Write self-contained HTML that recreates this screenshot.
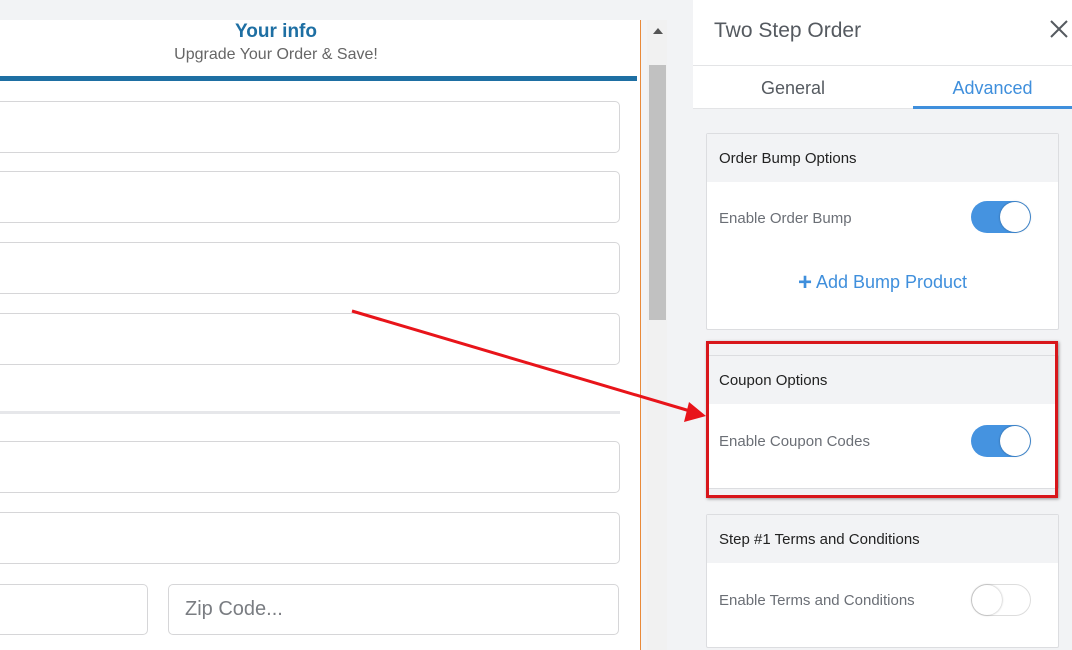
<!DOCTYPE html>
<html><head><style>
*{box-sizing:border-box;margin:0;padding:0}
body{width:1072px;height:650px;overflow:hidden;background:#f2f3f5;font-family:"Liberation Sans",sans-serif;position:relative}
.a{position:absolute}
.inp{position:absolute;border:1px solid #d6d6d8;border-radius:5px;background:#fff}
.card{position:absolute;left:706px;width:353px;background:#fff;border:1px solid #dcdde0;border-radius:2px}
.ch{height:48px;background:#f2f3f5;padding:16px 12px;font-size:15px;color:#222}
.lbl{position:absolute;left:12px;font-size:15px;color:#6b6f76}
.tg{position:absolute;left:264px;width:60px;height:32px;border-radius:16px;background:#4593e0}
.tg i{position:absolute;right:1px;top:1px;width:30px;height:30px;border-radius:50%;background:#fff;box-shadow:0 0 2px rgba(0,0,0,.35)}
.tg.off{background:#fff;border:1px solid #ddd}
.tg.off i{left:0;right:auto;top:0}
</style></head><body>
<div class="a" style="left:0;top:20px;width:641px;height:630px;background:#fff;border-right:1px solid #e98a3a"></div>
<div class="a" style="left:0;top:21px;width:552px;text-align:center;font-size:19px;font-weight:bold;color:#1e6fa3">Your info</div>
<div class="a" style="left:0;top:46px;width:552px;text-align:center;font-size:16px;color:#666">Upgrade Your Order &amp; Save!</div>
<div class="a" style="left:0;top:76px;width:637px;height:5px;background:#1e6fa3"></div>
<div class="inp" style="left:-10px;top:101px;width:630px;height:52px"></div>
<div class="inp" style="left:-10px;top:171px;width:630px;height:52px"></div>
<div class="inp" style="left:-10px;top:242px;width:630px;height:52px"></div>
<div class="inp" style="left:-10px;top:313px;width:630px;height:52px"></div>
<div class="a" style="left:0;top:411px;width:620px;height:3px;background:#e6e7ea"></div>
<div class="inp" style="left:-10px;top:441px;width:630px;height:52px"></div>
<div class="inp" style="left:-10px;top:512px;width:630px;height:52px"></div>
<div class="inp" style="left:-10px;top:584px;width:158px;height:51px"></div>
<div class="inp" style="left:168px;top:584px;width:451px;height:51px;padding:13px 16px;font-size:20px;color:#7a7d82">Zip Code...</div>
<div class="a" style="left:647px;top:20px;width:20px;height:630px;background:#f1f1f1"></div>
<div class="a" style="left:653px;top:28px;width:0;height:0;border-left:5px solid transparent;border-right:5px solid transparent;border-bottom:6px solid #555"></div>
<div class="a" style="left:649px;top:65px;width:17px;height:255px;background:#c1c1c1"></div>
<div class="a" style="left:693px;top:0;width:379px;height:650px;background:#fff"></div>
<div class="a" style="left:714px;top:19px;font-size:21px;color:#555a60">Two Step Order</div>
<svg class="a" style="left:1050px;top:20px" width="18" height="18"><path d="M1 1L17 17M17 1L1 17" stroke="#555a60" stroke-width="2"/></svg>
<div class="a" style="left:693px;top:65px;width:379px;height:1px;background:#e3e4e6"></div>
<div class="a" style="left:693px;top:78px;width:200px;text-align:center;font-size:18px;color:#555a60">General</div>
<div class="a" style="left:913px;top:78px;width:159px;text-align:center;font-size:18px;color:#3f8fdc">Advanced</div>
<div class="a" style="left:693px;top:108px;width:379px;height:1px;background:#e3e4e6"></div>
<div class="a" style="left:913px;top:106px;width:159px;height:3px;background:#3f8fdc"></div>
<div class="a" style="left:693px;top:109px;width:379px;height:541px;background:#f2f3f5"></div>
<div class="card" style="top:133px;height:197px"><div class="ch">Order Bump Options</div>
<div class="lbl" style="top:76px">Enable Order Bump</div><div class="tg" style="top:67px"><i></i></div>
<div class="a" style="left:0;width:351px;top:135px;text-align:center;font-size:18px;color:#3f8fdc"><b style="font-size:24px;vertical-align:-2px">+</b> Add Bump Product</div></div>
<div class="card" style="top:355px;height:134px"><div class="ch">Coupon Options</div>
<div class="lbl" style="top:77px">Enable Coupon Codes</div><div class="tg" style="top:69px"><i></i></div></div>
<div class="a" style="left:706px;top:341px;width:352px;height:157px;border:3px solid #d8161b;box-shadow:1px 1px 3px rgba(0,0,0,.4)"></div>
<div class="card" style="top:514px;height:134px"><div class="ch">Step #1 Terms and Conditions</div>
<div class="lbl" style="top:77px">Enable Terms and Conditions</div><div class="tg off" style="top:69px"><i></i></div></div>
<svg class="a" style="left:0;top:0" width="1072" height="650"><line x1="352" y1="311" x2="690" y2="411" stroke="#e8141a" stroke-width="3"/><polygon points="706,416 684,422 689,402" fill="#e8141a"/></svg>
</body></html>
